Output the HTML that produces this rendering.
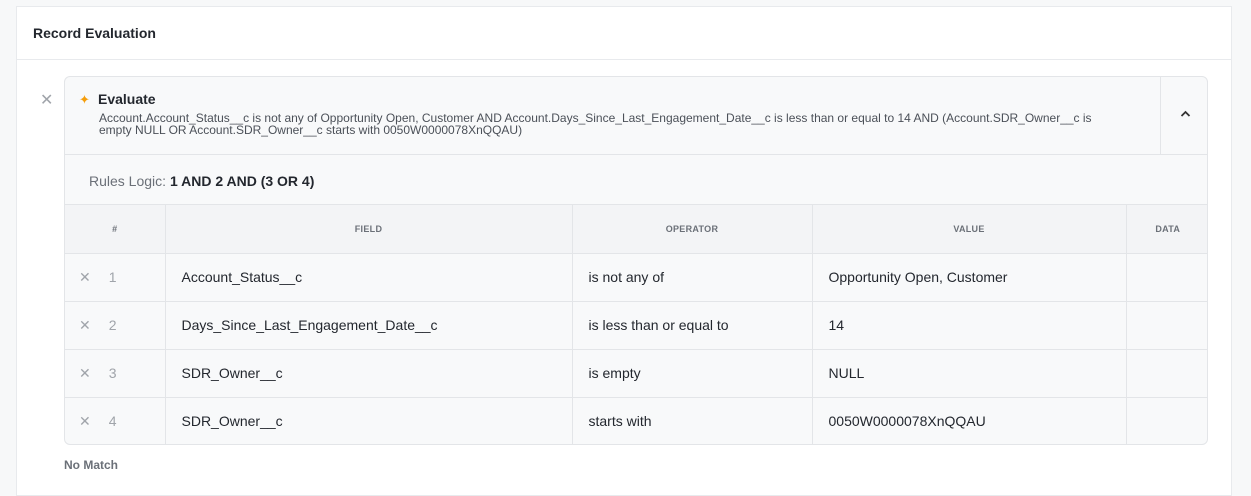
<!DOCTYPE html>
<html><head><style>
*{box-sizing:border-box;margin:0;padding:0}
body{width:1251px;height:491px;background:#f7f8f9;font-family:"Liberation Sans",sans-serif;color:#1f2328;position:relative;overflow:hidden}
.panel{position:absolute;left:16px;top:6px;width:1216px;height:490px;background:#fff;border:1px solid #e8eaed}
.ph{height:53px;border-bottom:1px solid #e8eaed;padding:18px 0 0 16px;font-size:14px;font-weight:bold;color:#23272e}
.x{position:absolute;color:#a0a4aa;font-size:16px}
.card{position:absolute;left:47px;top:69px;width:1144px;height:369px;background:#f8f9fa;border:1px solid #e3e5e8;border-radius:6px;overflow:hidden}
.hd{height:78px;border-bottom:1px solid #e3e5e8;position:relative}
.ttl{position:absolute;left:33px;top:14px;font-size:14px;font-weight:bold;color:#23272e}
.star{position:absolute;left:14px;top:15px;color:#f59e0b;font-size:13px}
.desc{position:absolute;left:34px;top:36px;width:1050px;font-size:12px;line-height:11.5px;color:#4b5058}
.chev{position:absolute;left:1095px;top:0;width:50px;height:78px;border-left:1px solid #e3e5e8}
.rl{height:50px;border-bottom:1px solid #e3e5e8;padding:18px 0 0 24px;font-size:14px;color:#6b7078}
.rl b{color:#23272e}
table{border-collapse:collapse;width:1144px;font-size:14px;color:#23272e}
td,th{border-left:1px solid #e3e5e8;border-bottom:1px solid #e3e5e8;height:48px;padding-left:16px;text-align:left;font-weight:normal}
th{background:#f3f4f6;font-size:9px;font-weight:bold;color:#6b7078;text-align:center;padding:0;letter-spacing:.3px}
td:first-child,th:first-child{border-left:none}
tr:last-child td{border-bottom:none}
.n{color:#a0a4aa;padding-left:14px}
</style></head><body>
<div class="panel">
<div class="ph">Record Evaluation</div>
<div class="x" style="left:23px;top:83px">✕</div>
<div class="card">
<div class="hd"><span class="star">✦</span><div class="ttl">Evaluate</div>
<div class="desc">Account.Account_Status__c is not any of Opportunity Open, Customer AND Account.Days_Since_Last_Engagement_Date__c is less than or equal to 14 AND (Account.SDR_Owner__c is<br>empty NULL OR Account.SDR_Owner__c starts with 0050W0000078XnQQAU)</div>
<div class="chev"><svg style="position:absolute;left:19px;top:33px" width="11" height="8" viewBox="0 0 11 8"><path d="M1.5 6 L5.5 2 L9.5 6" fill="none" stroke="#333" stroke-width="1.8"/></svg></div></div>
<div class="rl">Rules Logic: <b>1 AND 2 AND (3 OR 4)</b></div>
<table>
<tr><th style="width:100px">#</th><th style="width:407px">FIELD</th><th style="width:240px">OPERATOR</th><th style="width:314px">VALUE</th><th>DATA</th></tr>
<tr><td class="n"><span style="margin-right:18px">✕</span>1</td><td>Account_Status__c</td><td>is not any of</td><td>Opportunity Open, Customer</td><td></td></tr>
<tr><td class="n"><span style="margin-right:18px">✕</span>2</td><td>Days_Since_Last_Engagement_Date__c</td><td>is less than or equal to</td><td>14</td><td></td></tr>
<tr><td class="n"><span style="margin-right:18px">✕</span>3</td><td>SDR_Owner__c</td><td>is empty</td><td>NULL</td><td></td></tr>
<tr><td class="n"><span style="margin-right:18px">✕</span>4</td><td>SDR_Owner__c</td><td>starts with</td><td>0050W0000078XnQQAU</td><td></td></tr>
</table>
</div>
<div style="position:absolute;left:47px;top:451px;font-size:12px;font-weight:bold;color:#6b7078">No Match</div>
</div>
</body></html>
